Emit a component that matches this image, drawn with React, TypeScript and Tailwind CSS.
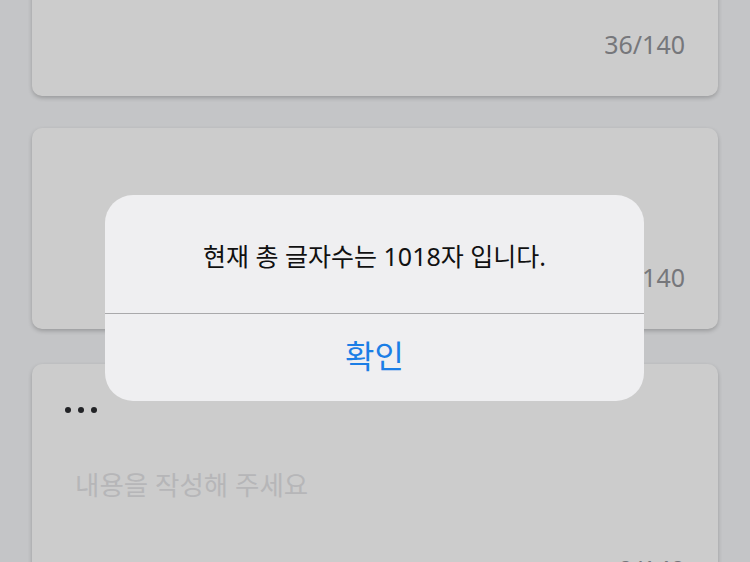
import React from "react";

const font = { fontFamily: '"Noto Sans", "Noto Sans CJK KR", sans-serif' };

function Counter({ text }: { text: string }) {
  return (
    <div className="flex justify-end pr-[33px] pb-[35px]">
      <span className="text-[25px] leading-[34px] text-[#76777b]">{text}</span>
    </div>
  );
}

export default function App() {
  return (
    <div
      className="relative h-[562px] w-[750px] overflow-hidden bg-[#c4c5c7]"
      style={font}
    >
      <div className="flex flex-col gap-[32px] px-[32px]">
        {/* card 1 (scrolled partially off the top) */}
        <div className="-mt-[104px] flex h-[200px] flex-col justify-between rounded-[10px] bg-[#cccccc] shadow-[0_2px_4px_rgba(0,0,0,0.22)]">
          <div className="pl-[22px] pt-[72px] text-[26px] leading-[34px] text-[#111]">
            글 작성
          </div>
          <Counter text="36/140" />
        </div>

        {/* card 2 */}
        <div className="flex h-[201px] flex-col justify-end rounded-[10px] bg-[#cccccc] shadow-[0_2px_4px_rgba(0,0,0,0.22)]">
          <Counter text="0/140" />
        </div>

        {/* card 3 */}
        <div className="mt-[3px] flex h-[260px] flex-col rounded-[10px] bg-[#cccccc] shadow-[0_2px_4px_rgba(0,0,0,0.22)]">
          <div className="pl-[31px] pt-[41px]">
            <svg width="36" height="10" viewBox="0 0 36 10">
              <circle cx="5" cy="5" r="3" fill="#222326" />
              <circle cx="18" cy="5" r="3" fill="#222326" />
              <circle cx="31" cy="5" r="3" fill="#222326" />
            </svg>
          </div>
          <div className="pl-[43px] pt-[52px] text-[26.5px] leading-[36px] text-[#b6b6b8]">
            내용을 작성해 주세요
          </div>
          <div className="mt-auto">
            <div className="flex justify-end pr-[33px] pb-[38px]">
              <span className="text-[25px] leading-[34px] text-[#76777b]">0/140</span>
            </div>
          </div>
        </div>
      </div>

      {/* alert dialog */}
      <div className="absolute left-[105px] top-[195px] flex h-[206px] w-[539px] flex-col overflow-hidden rounded-[28px] bg-[#efeff1]">
        <div className="flex h-[118px] items-center justify-center pt-[4px]">
          <span className="text-[25px] leading-[32px] text-[#111111]">
            현재 총 글자수는 1018자 입니다.
          </span>
        </div>
        <div className="h-px bg-[#a9a9ab]" />
        <div className="flex flex-1 items-center justify-center pb-[4px]">
          <span className="text-[32px] leading-[40px] text-[#1b7ee6]">확인</span>
        </div>
      </div>
    </div>
  );
}
